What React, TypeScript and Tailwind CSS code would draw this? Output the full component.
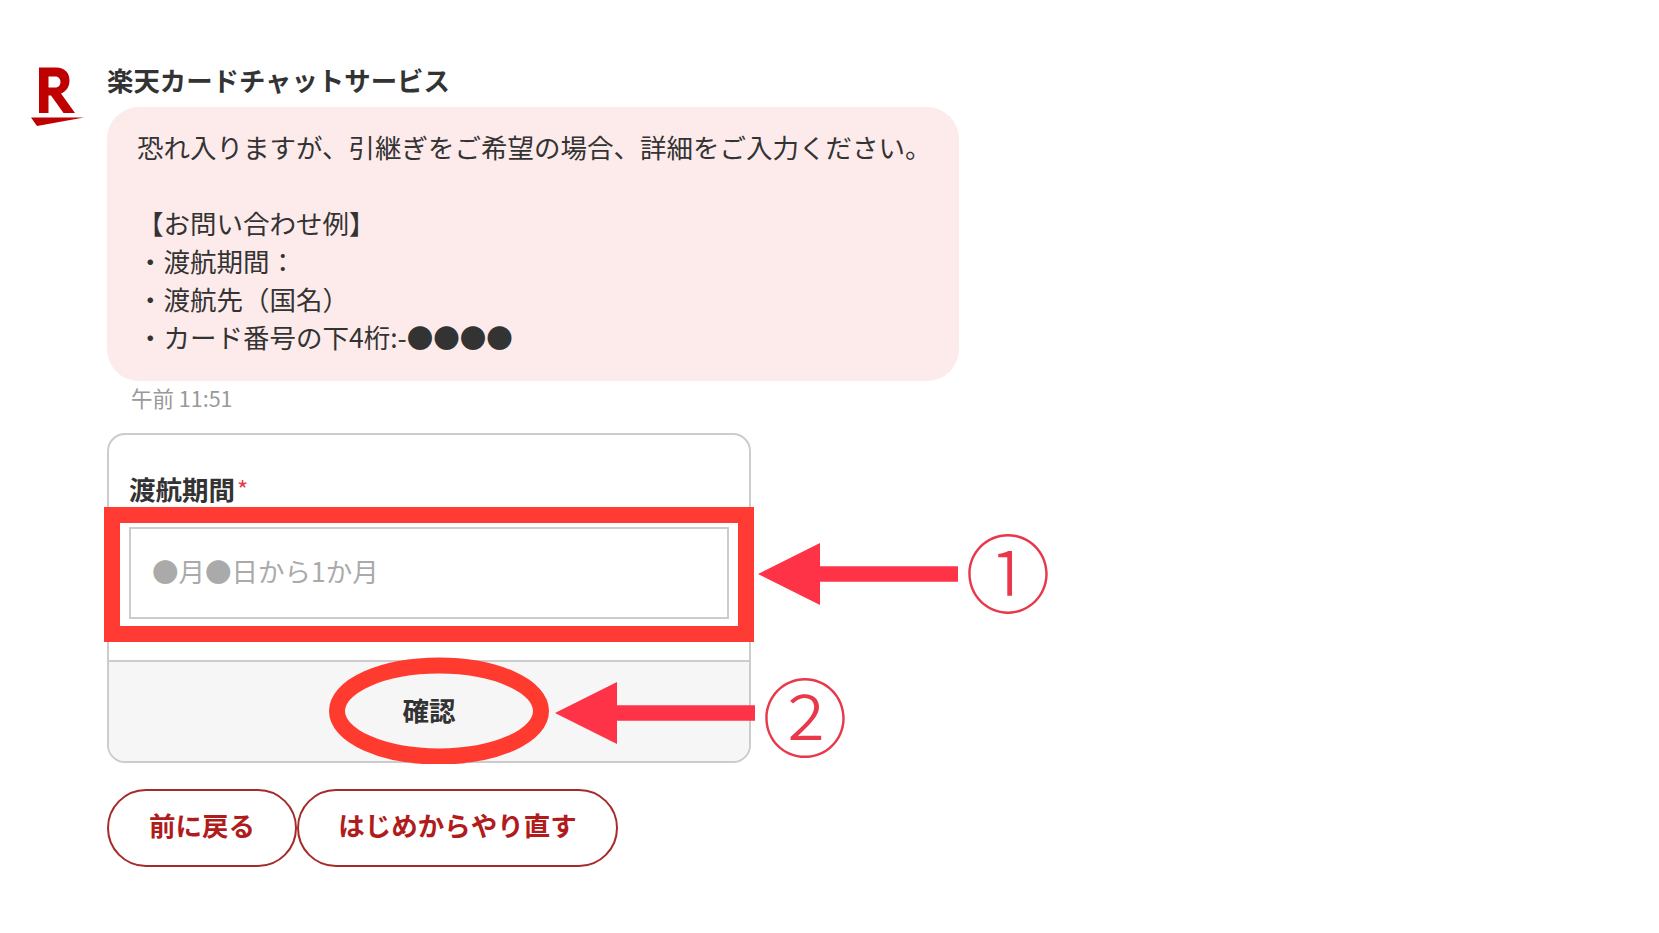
import React from 'react';

const jp = "font-['Noto_Sans_CJK_JP','Noto_Sans',sans-serif]";

const Logo = () => (
  <svg viewBox="0 0 80 80" className="w-[80px] h-[80px] shrink-0">
    <path
      fillRule="evenodd"
      fill="#bf0000"
      d="M19 12.5H36C45 12.5 49.5 18 49.5 25.5C49.5 32 46 36.5 41 38.5L55 58H43.5L31 40.5H28.5V58H19ZM28.5 21.5V32.5H35.5C38.5 32.5 40.5 30 40.5 27C40.5 24 38.5 21.5 35.5 21.5Z"
    />
    <path fill="#bf0000" d="M11 62.5H64L17 71Z" />
  </svg>
);

const Arrow = ({ className }: { className: string }) => (
  <svg viewBox="0 0 200 64" preserveAspectRatio="none" className={className}>
    <path fill="#ff3347" d="M0 32L62 0V24H200V40H62V64Z" />
  </svg>
);

const App = () => {
  return (
    <div className={`relative h-[933px] bg-white overflow-hidden text-[#333333] ${jp}`}>
      <div className="flex pl-[20px] pt-[55px]">
        <Logo />
        <div className="ml-[7px] pt-[6px]">
          <h1 className="text-[26.4px] leading-[38px] font-bold mb-[8px]">楽天カードチャットサービス</h1>

          <div className="w-[852px] h-[274px] rounded-[32px] bg-[#fdebeb] pl-[30px] pt-[21px] text-[26.5px] leading-[38px]">
            <p>恐れ入りますが、引継ぎをご希望の場合、詳細をご入力ください。</p>
            <p className="mt-[38px]">【お問い合わせ例】</p>
            <p>・渡航期間：</p>
            <p>・渡航先（国名）</p>
            <p>・カード番号の下4桁:-●●●●</p>
          </div>

          <div className="pl-[24px] pt-[1px] h-[52px] text-[21.5px] leading-[32px] text-[#999999]">午前 11:51</div>

          <div className="w-[644px] rounded-[18px] border-2 border-[#cccccc] overflow-hidden">
            <div className="px-[20px] pt-[36px] pb-[41px]">
              <div className="text-[26.5px] leading-[36px] font-bold mb-[20px]">
                渡航期間<span className="text-[#e8384a] text-[24px] font-normal align-[1px] ml-[2px]">*</span>
              </div>
              <div className="flex items-center h-[92px] border-2 border-[#cccccc] pl-[21px] pb-[4px] text-[26.5px] text-[#aaaaaa]">
                ●月●日から1か月
              </div>
            </div>
            <div className="h-[101px] border-t-2 border-[#cccccc] bg-[#f6f6f6] flex items-center justify-center pb-[4px] text-[26.5px] font-bold">
              確認
            </div>
          </div>

          <div className="flex mt-[26px]">
            <button className="w-[190px] h-[78px] rounded-full border-2 border-[#a52a2a] pb-[6px] text-[26.5px] font-bold text-[#b01c1c]">
              前に戻る
            </button>
            <button className="w-[321px] h-[78px] rounded-full border-2 border-[#a52a2a] pb-[6px] text-[26.5px] font-bold text-[#b01c1c]">
              はじめからやり直す
            </button>
          </div>
        </div>
      </div>

      {/* annotations on top of the screenshot */}
      <div className="absolute left-[104px] top-[507px] w-[650px] h-[135px] border-[16px] border-[#ff3b33]" />
      <svg viewBox="0 0 220 107" className="absolute left-[329px] top-[657px] w-[220px] h-[107px]">
        <ellipse cx="110" cy="54" rx="102" ry="45.5" fill="none" stroke="#ff3b30" strokeWidth="16" />
      </svg>
      <Arrow className="absolute left-[758px] top-[543px] w-[200px] h-[62px]" />
      <Arrow className="absolute left-[555px] top-[682px] w-[200px] h-[62px]" />
      <div className="absolute left-[958px] top-[512px] w-[100px] h-[116px] flex items-center justify-center text-[86px] leading-none font-light text-[#e8384a]">
        ①
      </div>
      <div className="absolute left-[755px] top-[656px] w-[100px] h-[116px] flex items-center justify-center text-[86px] leading-none font-light text-[#e8384a]">
        ②
      </div>
    </div>
  );
};

export default App;
